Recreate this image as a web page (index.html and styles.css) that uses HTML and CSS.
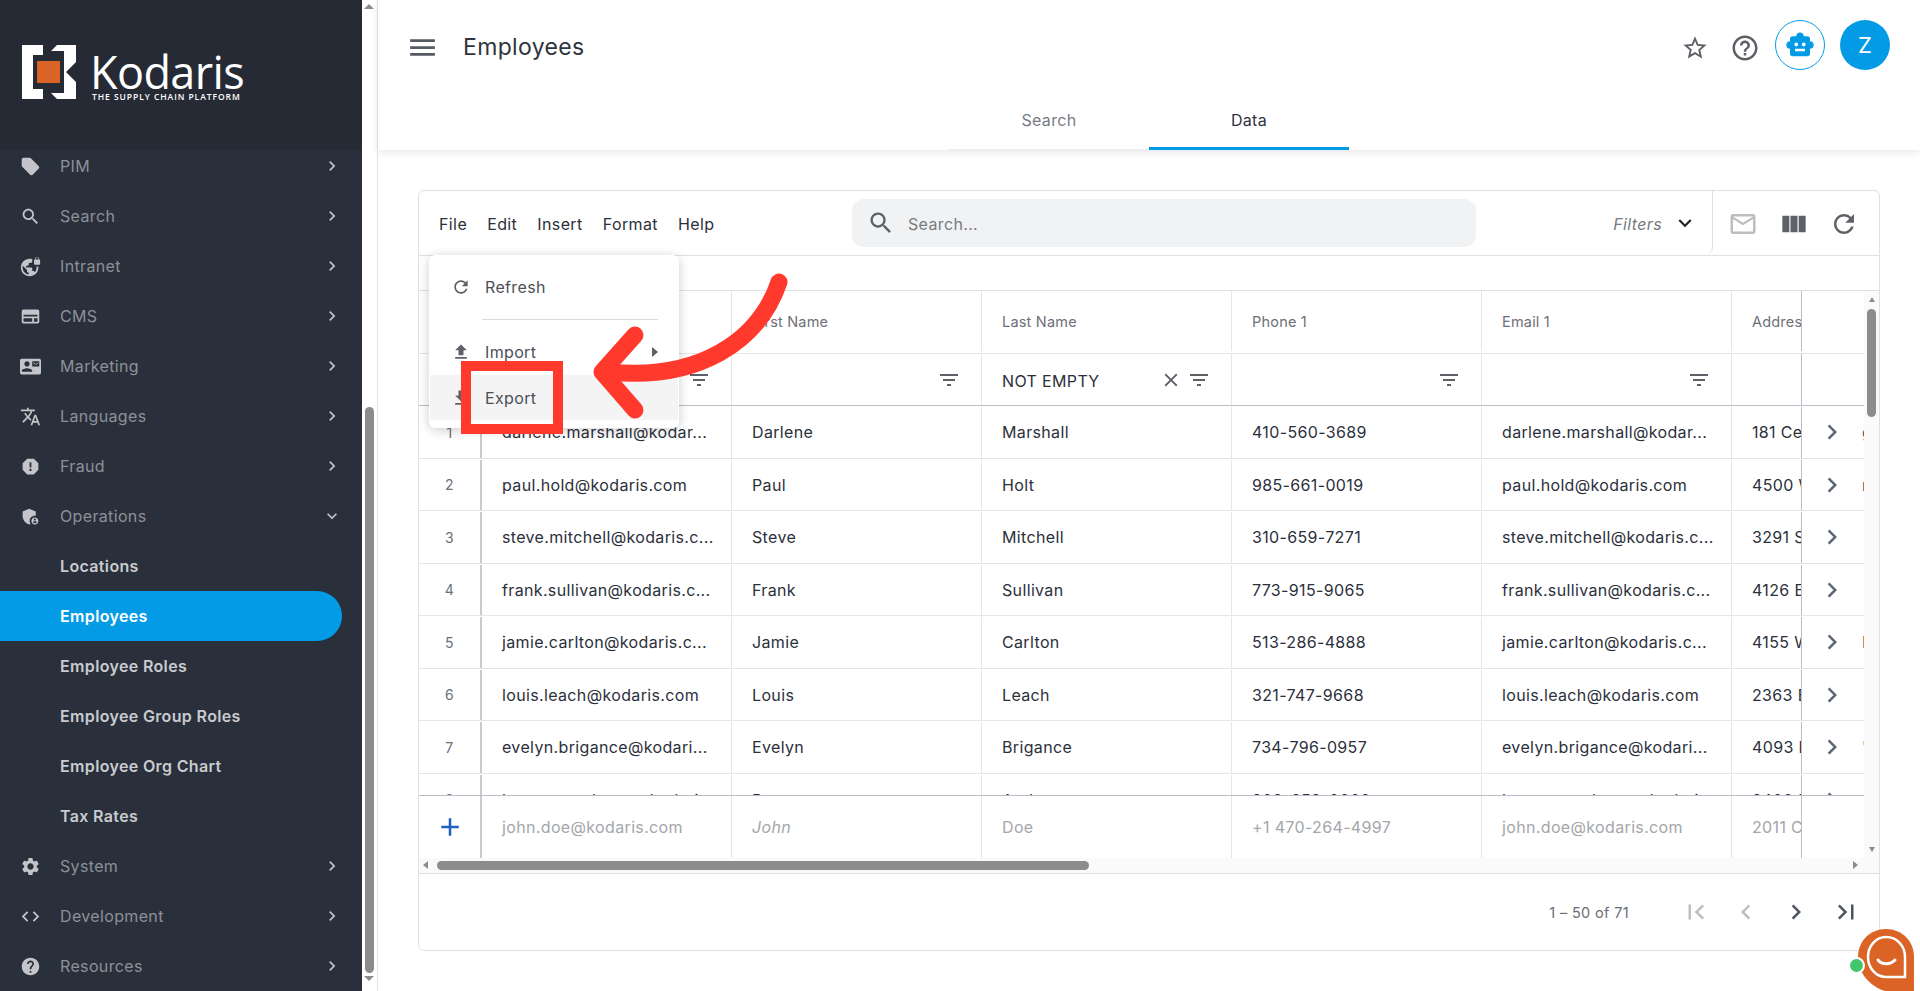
FILE: index.html
```html
<!DOCTYPE html>
<html lang="en">
<head>
<meta charset="utf-8">
<title>Employees</title>
<link rel="stylesheet" href="styles.css">
</head>
<body>
<svg class="sprite" aria-hidden="true">
<symbol id="chev" viewBox="0 0 24 24"><path d="M10 6L8.59 7.41 13.17 12l-4.58 4.59L10 18l6-6z"/></symbol>
<symbol id="prev" viewBox="0 0 24 24"><path d="M15.41 7.41L14 6l-6 6 6 6 1.41-1.41L10.83 12z"/></symbol>
<symbol id="more" viewBox="0 0 24 24"><path d="M16.59 8.59L12 13.17 7.41 8.59 6 10l6 6 6-6z"/></symbol>
<symbol id="tag" viewBox="0 0 24 24"><path d="M21.41 11.58l-9-9C12.05 2.22 11.55 2 11 2H4c-1.1 0-2 .9-2 2v7c0 .55.22 1.05.59 1.42l9 9c.36.36.86.58 1.41.58.55 0 1.05-.22 1.41-.59l7-7c.37-.36.59-.86.59-1.41 0-.55-.23-1.06-.59-1.42z"/></symbol>
<symbol id="search" viewBox="0 0 24 24"><path d="M15.5 14h-.79l-.28-.27C15.41 12.59 16 11.11 16 9.5 16 5.91 13.09 3 9.5 3S3 5.91 3 9.5 5.91 16 9.5 16c1.61 0 3.09-.59 4.23-1.57l.27.28v.79l5 4.99L20.49 19l-4.99-5zm-6 0C7.01 14 5 11.99 5 9.5S7.01 5 9.5 5 14 7.01 14 9.5 11.99 14 9.5 14z"/></symbol>
<symbol id="vpn" viewBox="0 0 24 24"><path d="M22 4v-.5C22 2.12 20.88 1 19.5 1S17 2.12 17 3.5V4c-.55 0-1 .45-1 1v4c0 .55.45 1 1 1h5c.55 0 1-.45 1-1V5c0-.55-.45-1-1-1zm-.8 0h-3.4v-.5c0-.94.76-1.7 1.7-1.7s1.7.76 1.7 1.7V4zm-2.28 8c.04.33.08.66.08 1 0 2.08-.8 3.97-2.1 5.39-.26-.81-1-1.39-1.9-1.39h-1v-3c0-.55-.45-1-1-1H7v-2h2c.55 0 1-.45 1-1V8h2c1.1 0 2-.9 2-2V3.46c-.95-.3-1.95-.46-3-.46C5.48 3 1 7.48 1 13s4.48 10 10 10 10-4.48 10-10c0-.34-.02-.67-.05-1h-2.03zM10 20.93c-3.95-.49-7-3.85-7-7.93 0-.62.08-1.21.21-1.79L8 16v1c0 1.1.9 2 2 2v1.93z"/></symbol>
<symbol id="cms" viewBox="0 0 24 24"><path fill-rule="evenodd" d="M4 4h16c1.1 0 2 .9 2 2v12c0 1.100-.9 2-2 2H4c-1.100 0-2-.9-2-2V6c0-1.100.9-2 2-2zm0 6v2h16v-2zm0 4v4h10v-4zm12 0v4h4v-4z"/></symbol>
<symbol id="contact" viewBox="0 0 24 24"><path d="M21 8V7l-3 2-3-2v1l3 2 3-2zm1-5H2C.9 3 0 3.9 0 5v14c0 1.1.9 2 2 2h20c1.1 0 1.99-.9 1.99-2L24 5c0-1.1-.9-2-2-2zM8 6c1.66 0 3 1.34 3 3s-1.34 3-3 3-3-1.34-3-3 1.34-3 3-3zm6 12H2v-1c0-2 4-3.1 6-3.1s6 1.1 6 3.1v1zm8-6h-8V6h8v6z"/></symbol>
<symbol id="translate" viewBox="0 0 24 24"><path d="M12.87 15.07l-2.54-2.51.03-.03c1.74-1.94 2.98-4.17 3.71-6.53H17V4h-7V2H8v2H1v1.99h11.17C11.5 7.92 10.44 9.75 9 11.35 8.07 10.32 7.3 9.19 6.69 8h-2c.73 1.63 1.73 3.17 2.98 4.56l-5.09 5.02L4 19l5-5 3.11 3.11.76-2.04zM18.5 10h-2L12 22h2l1.12-3h4.75L21 22h2l-4.5-12zm-2.62 7l1.62-4.33L19.12 17h-3.24z"/></symbol>
<symbol id="report" viewBox="0 0 24 24"><path d="M15.73 3H8.27L3 8.27v7.46L8.27 21h7.46L21 15.73V8.27L15.73 3zM12 17.3c-.72 0-1.3-.58-1.3-1.3 0-.72.58-1.3 1.3-1.3.72 0 1.3.58 1.3 1.3 0 .72-.58 1.300-1.3 1.300zm1-4.300h-2V7h2v6z"/></symbol>
<symbol id="admin" viewBox="0 0 24 24"><path d="M17 11c.34 0 .67.04 1 .09V6.270L10.500 3 3 6.270v4.910c0 4.540 3.200 8.790 7.500 9.820.55-.13 1.080-.32 1.600-.55-.69-.98-1.100-2.170-1.100-3.450 0-3.310 2.690-6 6-6z"/><path d="M17 13c-2.210 0-4 1.790-4 4s1.790 4 4 4 4-1.790 4-4-1.790-4-4-4zm0 1.380c.62 0 1.120.51 1.120 1.120s-.51 1.120-1.120 1.120-1.120-.51-1.120-1.120.5-1.120 1.120-1.120zm0 5.370c-.93 0-1.740-.46-2.240-1.170.05-.72 1.510-1.080 2.240-1.080s2.190.36 2.240 1.080c-.5.71-1.310 1.170-2.240 1.170z"/></symbol>
<symbol id="gear" viewBox="0 0 24 24"><path d="M19.14 12.94c.04-.3.06-.61.06-.94 0-.32-.02-.64-.07-.94l2.030-1.580c.18-.14.23-.41.12-.61l-1.920-3.320c-.12-.22-.37-.29-.59-.22l-2.390.96c-.5-.38-1.030-.7-1.620-.94l-.36-2.540c-.04-.24-.24-.41-.48-.41h-3.840c-.24 0-.43.17-.47.41l-.36 2.540c-.59.24-1.130.57-1.620.94l-2.390-.96c-.22-.08-.47 0-.59.22L2.740 8.870c-.12.21-.08.47.12.61l2.030 1.580c-.05.3-.09.63-.09.94s.02.64.07.94l-2.030 1.580c-.18.14-.23.41-.12.61l1.920 3.320c.12.22.37.29.59.22l2.390-.96c.5.38 1.030.7 1.620.94l.36 2.540c.05.24.24.41.48.41h3.840c.24 0 .44-.17.47-.41l.36-2.540c.59-.24 1.130-.56 1.620-.94l2.390.96c.22.08.47 0 .59-.22l1.920-3.320c.12-.22.07-.47-.12-.61l-2.010-1.580zM12 15.600c-1.980 0-3.600-1.620-3.600-3.600s1.620-3.600 3.600-3.600 3.600 1.620 3.600 3.600-1.620 3.600-3.600 3.600z"/></symbol>
<symbol id="code" viewBox="0 0 24 24"><path d="M9.400 16.600L4.800 12l4.600-4.600L8 6l-6 6 6 6 1.400-1.400zm5.200 0l4.600-4.600-4.600-4.600L16 6l6 6-6 6-1.400-1.400z"/></symbol>
<symbol id="help" viewBox="0 0 24 24"><path d="M12 2C6.480 2 2 6.480 2 12s4.480 10 10 10 10-4.480 10-10S17.520 2 12 2zm1 17h-2v-2h2v2zm2.070-7.750l-.9.920C13.450 12.900 13 13.500 13 15h-2v-.5c0-1.100.45-2.100 1.170-2.830l1.240-1.260c.37-.36.59-.86.59-1.410 0-1.100-.9-2-2-2s-2 .9-2 2H8c0-2.210 1.790-4 4-4s4 1.790 4 4c0 .88-.36 1.680-.93 2.250z"/></symbol>
<symbol id="helpo" viewBox="0 0 24 24"><path d="M11 18h2v-2h-2v2zm1-16C6.480 2 2 6.480 2 12s4.480 10 10 10 10-4.480 10-10S17.520 2 12 2zm0 18c-4.410 0-8-3.590-8-8s3.590-8 8-8 8 3.590 8 8-3.590 8-8 8zm0-14c-2.210 0-4 1.790-4 4h2c0-1.100.9-2 2-2s2 .9 2 2c0 2-3 1.750-3 5h2c0-2.250 3-2.500 3-5 0-2.210-1.790-4-4-4z"/></symbol>
<symbol id="star" viewBox="0 0 24 24"><path d="M22 9.240l-7.190-.62L12 2 9.190 8.630 2 9.240l5.460 4.730L5.820 21 12 17.270 18.180 21l-1.630-7.030L22 9.240zM12 15.400l-3.760 2.270 1-4.280-3.320-2.880 4.380-.38L12 6.100l1.710 4.040 4.380.38-3.320 2.880 1 4.280L12 15.400z"/></symbol>
<symbol id="menu" viewBox="0 0 24 24"><path d="M3 18h18v-2H3v2zm0-5h18v-2H3v2zm0-7v2h18V6H3z"/></symbol>
<symbol id="refresh" viewBox="0 0 24 24"><path d="M17.650 6.350C16.200 4.900 14.210 4 12 4c-4.420 0-7.990 3.580-7.990 8s3.570 8 7.990 8c3.730 0 6.840-2.550 7.730-6h-2.080c-.82 2.330-3.040 4-5.650 4-3.310 0-6-2.690-6-6s2.690-6 6-6c1.660 0 3.140.69 4.220 1.780L13 11h7V4l-2.350 2.350z"/></symbol>
<symbol id="filter" viewBox="0 0 24 24"><path d="M10 18h4v-2h-4v2zM3 6v2h18V6H3zm3 7h12v-2H6v2z"/></symbol>
<symbol id="upload" viewBox="0 0 24 24"><path d="M9 16h6v-6h4l-7-7-7 7h4zm-4 2h14v2H5z"/></symbol>
<symbol id="download" viewBox="0 0 24 24"><path d="M19 9h-4V3H9v6H5l7 7 7-7zM5 18v2h14v-2H5z"/></symbol>
<symbol id="mail" viewBox="0 0 24 24"><path d="M20 4H4c-1.100 0-1.990.9-1.990 2L2 18c0 1.100.9 2 2 2h16c1.100 0 2-.9 2-2V6c0-1.100-.9-2-2-2zm0 14H4V8l8 5 8-5v10zm-8-7L4 6h16l-8 5z"/></symbol>
<symbol id="week" viewBox="0 0 24 24"><path d="M2 5h6v14H2zM9 5h6v14H9zM16 5h6v14h-6z"/></symbol>
<symbol id="close" viewBox="0 0 24 24"><path d="M19 6.410L17.590 5 12 10.590 6.410 5 5 6.410 10.590 12 5 17.590 6.410 19 12 13.410 17.590 19 19 17.590 13.410 12z"/></symbol>
<symbol id="first" viewBox="0 0 24 24"><path d="M18.410 16.590L13.820 12l4.590-4.590L17 6l-6 6 6 6zM6 6h2v12H6z"/></symbol>
<symbol id="last" viewBox="0 0 24 24"><path d="M5.590 7.410L10.180 12l-4.590 4.590L7 18l6-6-6-6zM16 6h2v12h-2z"/></symbol>
<symbol id="add" viewBox="0 0 24 24"><path d="M19 13h-6v6h-2v-6H5v-2h6V5h2v6h6v2z"/></symbol>
<symbol id="toy" viewBox="0 0 24 24"><path d="M20 9V7c0-1.100-.9-2-2-2h-3c0-1.660-1.340-3-3-3S9 3.340 9 5H6c-1.100 0-2 .9-2 2v2c-1.660 0-3 1.340-3 3s1.340 3 3 3v4c0 1.100.9 2 2 2h12c1.100 0 2-.9 2-2v-4c1.660 0 3-1.340 3-3s-1.340-3-3-3zM7.500 11.500C7.500 10.670 8.170 10 9 10s1.500.67 1.500 1.500S9.830 13 9 13s-1.500-.67-1.500-1.500zM16 17H8v-2h8v2zm-1-4c-.83 0-1.500-.67-1.500-1.500S14.170 10 15 10s1.500.67 1.500 1.500S15.830 13 15 13z"/></symbol>
</svg>

<aside class="sidebar">
  <div class="brand">
    <svg class="brand-mark" viewBox="0 0 54 54">
      <path class="mark-white" d="M0 0H21V10H11V44H21V54H0Z"/>
      <path class="mark-white" d="M29 6L35 0H54V17L44 27L54 37V54H35L29 48H42V6Z"/>
      <rect class="mark-orange" x="15" y="16" width="23" height="22"/>
    </svg>
    <div class="brand-text">
      <div class="brand-name">Kodaris</div>
      <div class="brand-tag">THE SUPPLY CHAIN PLATFORM</div>
    </div>
  </div>
  <nav class="nav">
    <a class="nav-item"><svg class="nav-ico"><use href="#tag"/></svg><span>PIM</span><svg class="nav-arrow"><use href="#chev"/></svg></a>
    <a class="nav-item"><svg class="nav-ico"><use href="#search"/></svg><span>Search</span><svg class="nav-arrow"><use href="#chev"/></svg></a>
    <a class="nav-item"><svg class="nav-ico"><use href="#vpn"/></svg><span>Intranet</span><svg class="nav-arrow"><use href="#chev"/></svg></a>
    <a class="nav-item"><svg class="nav-ico"><use href="#cms"/></svg><span>CMS</span><svg class="nav-arrow"><use href="#chev"/></svg></a>
    <a class="nav-item"><svg class="nav-ico"><use href="#contact"/></svg><span>Marketing</span><svg class="nav-arrow"><use href="#chev"/></svg></a>
    <a class="nav-item"><svg class="nav-ico"><use href="#translate"/></svg><span>Languages</span><svg class="nav-arrow"><use href="#chev"/></svg></a>
    <a class="nav-item"><svg class="nav-ico"><use href="#report"/></svg><span>Fraud</span><svg class="nav-arrow"><use href="#chev"/></svg></a>
    <a class="nav-item"><svg class="nav-ico"><use href="#admin"/></svg><span>Operations</span><svg class="nav-arrow"><use href="#more"/></svg></a>
    <a class="nav-sub">Locations</a>
    <a class="nav-sub nav-active">Employees</a>
    <a class="nav-sub">Employee Roles</a>
    <a class="nav-sub">Employee Group Roles</a>
    <a class="nav-sub">Employee Org Chart</a>
    <a class="nav-sub">Tax Rates</a>
    <a class="nav-item"><svg class="nav-ico"><use href="#gear"/></svg><span>System</span><svg class="nav-arrow"><use href="#chev"/></svg></a>
    <a class="nav-item"><svg class="nav-ico"><use href="#code"/></svg><span>Development</span><svg class="nav-arrow"><use href="#chev"/></svg></a>
    <a class="nav-item"><svg class="nav-ico"><use href="#help"/></svg><span>Resources</span><svg class="nav-arrow"><use href="#chev"/></svg></a>
  </nav>
</aside>
<div class="side-scroll">
  <i class="tri-up"></i>
  <div class="side-thumb"></div>
  <i class="tri-down"></i>
</div>

<main class="main">
  <header class="topbar">
    <div class="top-row">
      <svg class="burger"><use href="#menu"/></svg>
      <h1 class="title">Employees</h1>
      <svg class="top-star"><use href="#star"/></svg>
      <svg class="top-help"><use href="#helpo"/></svg>
      <div class="bot"><svg class="bot-ico"><use href="#toy"/></svg></div>
      <div class="avatar">Z</div>
    </div>
    <div class="tabs">
      <div class="tab">Search</div>
      <div class="tab tab-on">Data</div>
    </div>
  </header>

  <section class="card">
    <div class="toolbar">
      <div class="tool-left">
        <div class="menus"><span>File</span><span>Edit</span><span>Insert</span><span>Format</span><span>Help</span></div>
        <div class="searchbox"><svg class="search-ico"><use href="#search"/></svg><span>Search...</span></div>
        <div class="filters"><em>Filters</em><svg class="filters-ico"><use href="#more"/></svg></div>
      </div>
      <div class="tool-right">
        <svg class="t-mail"><use href="#mail"/></svg>
        <svg class="t-week"><use href="#week"/></svg>
        <svg class="t-refresh"><use href="#refresh"/></svg>
      </div>
    </div>
    <div class="blank"></div>
    <div class="grid-wrap">
      <div class="grid-main">
        <div class="row head">
          <div class="c c-i"></div><div class="c"></div><div class="c">First Name</div><div class="c">Last Name</div><div class="c">Phone 1</div><div class="c">Email 1</div><div class="c c-a">Address 1</div><div class="c c-s"></div><div class="c-p"></div>
        </div>
        <div class="row filt">
          <div class="c c-i"></div>
          <div class="c"><svg class="f-ico"><use href="#filter"/></svg></div>
          <div class="c"><svg class="f-ico"><use href="#filter"/></svg></div>
          <div class="c"><span class="f-val">NOT EMPTY</span><svg class="f-x"><use href="#close"/></svg><svg class="f-ico"><use href="#filter"/></svg></div>
          <div class="c"><svg class="f-ico"><use href="#filter"/></svg></div>
          <div class="c"><svg class="f-ico"><use href="#filter"/></svg></div>
          <div class="c c-a"></div><div class="c c-s"></div><div class="c-p"></div>
        </div>
        <div class="body">
          <div class="row data"><div class="c c-i">1</div><div class="c"><span class="t">darlene.marshall@kodar...</span></div><div class="c">Darlene</div><div class="c">Marshall</div><div class="c">410-560-3689</div><div class="c"><span class="t">darlene.marshall@kodar...</span></div><div class="c c-a">181 Cedar</div><div class="c c-s"><svg class="r-ico"><use href="#chev"/></svg></div><div class="c-p">g</div></div>
          <div class="row data"><div class="c c-i">2</div><div class="c"><span class="t">paul.hold@kodaris.com</span></div><div class="c">Paul</div><div class="c">Holt</div><div class="c">985-661-0019</div><div class="c"><span class="t">paul.hold@kodaris.com</span></div><div class="c c-a">4500 West</div><div class="c c-s"><svg class="r-ico"><use href="#chev"/></svg></div><div class="c-p">n</div></div>
          <div class="row data"><div class="c c-i">3</div><div class="c"><span class="t">steve.mitchell@kodaris.c...</span></div><div class="c">Steve</div><div class="c">Mitchell</div><div class="c">310-659-7271</div><div class="c"><span class="t">steve.mitchell@kodaris.c...</span></div><div class="c c-a">3291 South</div><div class="c c-s"><svg class="r-ico"><use href="#chev"/></svg></div><div class="c-p"></div></div>
          <div class="row data"><div class="c c-i">4</div><div class="c"><span class="t">frank.sullivan@kodaris.c...</span></div><div class="c">Frank</div><div class="c">Sullivan</div><div class="c">773-915-9065</div><div class="c"><span class="t">frank.sullivan@kodaris.c...</span></div><div class="c c-a">4126 East</div><div class="c c-s"><svg class="r-ico"><use href="#chev"/></svg></div><div class="c-p"></div></div>
          <div class="row data"><div class="c c-i">5</div><div class="c"><span class="t">jamie.carlton@kodaris.c...</span></div><div class="c">Jamie</div><div class="c">Carlton</div><div class="c">513-286-4888</div><div class="c"><span class="t">jamie.carlton@kodaris.c...</span></div><div class="c c-a">4155 West</div><div class="c c-s"><svg class="r-ico"><use href="#chev"/></svg></div><div class="c-p">I</div></div>
          <div class="row data"><div class="c c-i">6</div><div class="c"><span class="t">louis.leach@kodaris.com</span></div><div class="c">Louis</div><div class="c">Leach</div><div class="c">321-747-9668</div><div class="c"><span class="t">louis.leach@kodaris.com</span></div><div class="c c-a">2363 East</div><div class="c c-s"><svg class="r-ico"><use href="#chev"/></svg></div><div class="c-p"></div></div>
          <div class="row data"><div class="c c-i">7</div><div class="c"><span class="t">evelyn.brigance@kodari...</span></div><div class="c">Evelyn</div><div class="c">Brigance</div><div class="c">734-796-0957</div><div class="c"><span class="t">evelyn.brigance@kodari...</span></div><div class="c c-a">4093 East</div><div class="c c-s"><svg class="r-ico"><use href="#chev"/></svg></div><div class="c-p">'</div></div>
          <div class="row data"><div class="c c-i">8</div><div class="c"><span class="t">bennett.andrews@kodari...</span></div><div class="c">Bennett</div><div class="c">Andrews</div><div class="c">909-659-0000</div><div class="c"><span class="t">bennett.andrews@kodari...</span></div><div class="c c-a">2400 East</div><div class="c c-s"><svg class="r-ico"><use href="#chev"/></svg></div><div class="c-p"></div></div>
        </div>
        <div class="row foot">
          <div class="c c-i"><svg class="add-ico"><use href="#add"/></svg></div>
          <div class="c">john.doe@kodaris.com</div><div class="c"><em>John</em></div><div class="c">Doe</div><div class="c">+1 470-264-4997</div><div class="c">john.doe@kodaris.com</div><div class="c c-a">2011 Cedar</div><div class="c c-s"></div><div class="c-p"></div>
        </div>
      </div>
      <div class="v-track">
        <i class="tri-up tri-small"></i>
        <div class="v-thumb"></div>
        <i class="tri-down tri-small"></i>
      </div>
    </div>
    <div class="h-track">
      <i class="tri-left"></i>
      <div class="h-thumb"></div>
      <i class="tri-right"></i>
    </div>
    <div class="pager">
      <span class="pager-text">1 – 50 of 71</span>
      <svg class="pg pg-off"><use href="#first"/></svg>
      <svg class="pg pg-off"><use href="#prev"/></svg>
      <svg class="pg"><use href="#chev"/></svg>
      <svg class="pg"><use href="#last"/></svg>
    </div>

    <div class="dropdown">
      <div class="dd-item dd-first"><svg class="dd-ico"><use href="#refresh"/></svg><span>Refresh</span></div>
      <div class="dd-line"></div>
      <div class="dd-item dd-import"><svg class="dd-ico"><use href="#upload"/></svg><span>Import</span><i class="dd-tri"></i></div>
      <div class="dd-item dd-export"><svg class="dd-ico"><use href="#download"/></svg><span>Export</span></div>
    </div>
    <div class="redbox"></div>
    <svg class="red-arrow" viewBox="0 0 200 170">
      <path d="M190 16C170 75 110 115 20 106"/>
      <path d="M46 69L13 106L46 144"/>
    </svg>
  </section>
</main>

<div class="chat">
  <svg class="chat-svg" viewBox="0 0 64 62">
    <path class="chat-bg" d="M36 0C52 0 64 12 64 28V62H35C22 58 8 46 8 28C8 12 20 0 36 0Z"/>
    <path class="chat-line" d="M36 8C47 8 55 17 55 28V48H36C26 48 18 39 18 28C18 17 26 8 36 8Z"/>
    <path class="chat-smile" d="M28 31C32 36 40 36 45 31"/>
  </svg>
  <i class="chat-dot"></i>
</div>
</body>
</html>
```
FILE: styles.css
```css
* { box-sizing: border-box; }
html, body { margin: 0; height: 991px; overflow: hidden; }
body {
  display: flex;
  background: #fff;
  font-family: Inter, "Liberation Sans", sans-serif;
  font-size: 16px;
  letter-spacing: .35px;
  color: #2b303b;
}
.sprite { display: none; }
svg { fill: currentColor; flex: none; }

/* sidebar */
.sidebar { width: 362px; height: 991px; background: #2a303b; flex: none; overflow: hidden; }
.brand {
  position: relative; z-index: 1;
  height: 150px; background: #252a35;
  display: flex; align-items: flex-start;
  padding: 45px 0 0 22px;
}
.brand-mark { width: 54px; height: 54px; }
.mark-white { fill: #fff; }
.mark-orange { fill: #dc6326; }
.brand-text { margin-left: 14px; color: #fff; }
.brand-name { font-family: "Open Sans", sans-serif; font-size: 45px; line-height: 40px; margin-top: 7px; letter-spacing: -0.6px; }
.brand-tag { font-family: "Open Sans", sans-serif; font-size: 8.5px; line-height: 10px; letter-spacing: 0.95px; font-weight: 600; margin-left: 2px; }
.nav { margin-top: -9px; display: flex; flex-direction: column; }
.nav-item, .nav-sub { height: 50px; display: flex; align-items: center; flex: none; }
.nav-item { color: #8c9099; padding-left: 20px; }
.nav-ico { width: 21px; height: 21px; color: #c3c5ca; margin-right: 19px; }
.nav-item span { flex: 1; }
.nav-arrow { width: 20px; height: 20px; color: #c3c5ca; margin-right: 20px; }
.nav-sub { padding-left: 60px; font-weight: 600; color: #c9cbcf; }
.nav-active { background: #039be5; color: #fff; width: 342px; border-radius: 0 25px 25px 0; }

.side-scroll { width: 16px; height: 991px; flex: none; border-right: 1px solid #e4e4e4; display: flex; flex-direction: column; align-items: center; padding: 4px 1px 6px 0; }
.tri-up, .tri-down { display: block; width: 0; height: 0; border-left: 5px solid transparent; border-right: 5px solid transparent; flex: none; }
.tri-up { border-bottom: 5px solid #8c8c8c; }
.tri-down { border-top: 5px solid #8c8c8c; }
.tri-small { border-left-width: 3.5px; border-right-width: 3.5px; }
.side-thumb { width: 9px; height: 566px; margin: 398px 0 3px; background: #8c8c8c; border-radius: 5px; flex: none; }

/* main */
.main { flex: 1; min-width: 0; height: 991px; padding: 0 40px; position: relative; }
.topbar {
  height: 150px; margin: 0 -40px;
  box-shadow: 0 2px 8px rgba(0,0,0,.1);
}
.top-row { height: 94px; display: flex; align-items: flex-start; padding: 31px 30px 0 28px; }
.burger { width: 33px; height: 33px; color: #555a63; }
.title { margin: 0 0 0 24px; flex: 1; font-size: 23px; line-height: 32px; font-weight: 400; color: #2f343e; }
.top-star { width: 28px; height: 28px; color: #5d6066; margin: 3px 0 0 0; }
.top-help { width: 30px; height: 30px; color: #5d6066; margin: 2px 0 0 21px; }
.bot { width: 50px; height: 50px; border: 1px solid #039be5; border-radius: 50%; margin: -11px 0 0 15px; display: flex; align-items: center; justify-content: center; }
.bot-ico { width: 30px; height: 30px; color: #039be5; }
.avatar { width: 50px; height: 50px; border-radius: 50%; background: #039be5; color: #fff; margin: -11px 0 0 15px; display: flex; align-items: center; justify-content: center; font-size: 22px; }
.tabs { height: 56px; display: flex; justify-content: center; }
.tab { width: 200px; display: flex; align-items: center; justify-content: center; color: #777b83; border-bottom: 1px solid #ececec; padding-bottom: 3px; }
.tab-on { color: #2f343e; border-bottom: 3px solid #039be5; padding-bottom: 1px; }

/* card */
.card { position: relative; margin-top: 40px; height: 761px; border: 1px solid #e0e0e0; border-radius: 6px; }
.toolbar { height: 65px; display: flex; border-bottom: 1px solid #e0e0e0; }
.tool-left { width: 1294px; border-right: 1px solid #e0e0e0; border-radius: 0 0 8px 0; display: flex; align-items: center; padding-left: 20px; }
.menus { display: flex; gap: 20px; width: 413px; padding-top: 2px; letter-spacing: .4px; }
.searchbox { width: 624px; height: 48px; background: #f1f2f4; border-radius: 12px; display: flex; align-items: center; padding-left: 15px; color: #777b83; }
.searchbox span { padding-top: 2px; }
.search-ico { width: 28px; height: 28px; color: #5d6066; margin-right: 13px; }
.filters { margin-left: auto; display: flex; align-items: center; color: #777b83; padding-right: 14px; }
.filters em { padding-top: 2px; }
.filters-ico { width: 26px; height: 26px; color: #222; margin-left: 10px; }
.tool-right { flex: 1; display: flex; align-items: center; padding: 2px 0 0 15px; }
.t-mail { width: 30px; height: 30px; color: #bdbdbd; }
.t-week { width: 28px; height: 28px; color: #5f6169; margin-left: 22px; }
.t-refresh { width: 30px; height: 30px; color: #5f6169; margin-left: 21px; }
.blank { height: 35px; border-bottom: 1px solid #e0e0e0; }

.grid-wrap { display: flex; height: 567px; }
.grid-main { width: 1445px; display: flex; flex-direction: column; overflow: hidden; }
.row { display: grid; grid-template-columns: 63px repeat(5, 250px) 70px 60px 2px; flex: none; }
.c { border-right: 1px solid #e6e6e6; padding: 0 20px; display: flex; align-items: center; white-space: nowrap; overflow: hidden; min-width: 0; }
.c-p { overflow: hidden; width: 2px; display: flex; align-items: center; white-space: nowrap; color: #555; }
.c-i { border-right: 2px solid #c9cbd3; justify-content: center; padding: 0; color: #6c6f77; font-size: 14px; }
.c-a { border-right: 1px solid #bbbcc6; padding-right: 0; }
.c-s { border-right: 0; padding: 0; justify-content: center; }
.head { height: 63px; border-bottom: 1px solid #e6e6e6; padding-bottom: 2px; font-size: 14.5px; letter-spacing: .2px; color: #6e7078; }
.head .c { height: 100%; margin-bottom: -2px; }
.filt { height: 52px; border-bottom: 1px solid #bcbdc9; }
.filt .c { justify-content: flex-end; }
.f-val { margin-right: auto; padding-top: 2px; }
.f-ico { width: 24px; height: 24px; color: #5d6066; }
.f-x { width: 22px; height: 22px; color: #5d6066; margin-right: 5px; }
.body { height: 389px; overflow: hidden; flex: none; }
.data { height: 52.5px; border-bottom: 1px solid #e6e6e6; padding-top: 1px; }
.r-ico { width: 30px; height: 30px; color: #5d6675; }
.foot { height: 63px; border-top: 1px solid #bcbdc9; color: #a4a6aa; }
.add-ico { width: 30px; height: 30px; color: #1f5fbf; }
.v-track { flex: 1; background: #fafafa; display: flex; flex-direction: column; align-items: center; padding: 6px 0 6px; }
.v-thumb { width: 9px; height: 108px; margin-top: 7px; background: #8c8c8c; border-radius: 5px; }
.v-track .tri-down { margin-top: auto; }
.h-track { height: 16px; background: #fafafa; border-bottom: 1px solid #e0e0e0; display: flex; align-items: center; padding: 0 21px 1px 4px; }
.tri-left, .tri-right { display: block; width: 0; height: 0; border-top: 4px solid transparent; border-bottom: 4px solid transparent; flex: none; }
.tri-left { border-right: 5px solid #8c8c8c; }
.tri-right { border-left: 5px solid #8c8c8c; margin-left: auto; }
.h-thumb { width: 652px; height: 9px; margin-left: 9px; background: #8c8c8c; border-radius: 5px; }
.pager { height: 76px; display: flex; align-items: center; justify-content: flex-end; padding: 0 18px 0 0; color: #6a6d75; }
.pager-text { font-size: 14.5px; margin-right: 32px; }
.pg { width: 30px; height: 30px; color: #4e5563; margin-left: 20px; }
.pg-off { color: #bcbec2; }

/* file menu, over the grid */
.dropdown { position: absolute; left: 10px; top: 64px; width: 250px; height: 173px; background: #fff; border-radius: 6px; box-shadow: 0 2px 12px rgba(0,0,0,.2); padding-top: 10px; color: #4c4f57; }
.dd-item { display: flex; align-items: center; position: relative; padding-left: 22px; }
.dd-ico { width: 20px; height: 20px; color: #5d6066; margin-right: 14px; }
.dd-first { height: 44px; }
.dd-line { height: 1px; background: #dcdcdc; margin: 10px 21px 10px 53px; }
.dd-import { height: 44px; }
.dd-tri { position: absolute; right: 21px; top: 17px; width: 0; height: 0; border-top: 5.500px solid transparent; border-bottom: 5.500px solid transparent; border-left: 6px solid #5d6066; }
.dd-export { height: 45px; background: #f4f4f4; margin: 1px 1px 0; padding-left: 21px; }
.redbox { position: absolute; left: 42px; top: 170px; width: 102px; height: 73px; border: 10px solid #ff3a2d; }
.red-arrow { position: absolute; left: 170px; top: 75px; width: 200px; height: 170px; fill: none; stroke: #ff3a2d; stroke-width: 17; stroke-linecap: round; stroke-linejoin: round; }

/* chat widget */
.chat { position: absolute; right: 6px; bottom: 0; width: 64px; height: 62px; }
.chat-svg { position: absolute; left: 0; top: 0; width: 64px; height: 62px; }
.chat-bg { fill: #dc6326; }
.chat-line { fill: none; stroke: #fff; stroke-width: 2.5; }
.chat-smile { fill: none; stroke: #fff; stroke-width: 3; stroke-linecap: round; }
.chat-dot { position: absolute; left: 0; top: 29.5px; width: 13px; height: 13px; border-radius: 50%; background: #41c66b; box-shadow: 0 0 0 2px #fff; }
```
